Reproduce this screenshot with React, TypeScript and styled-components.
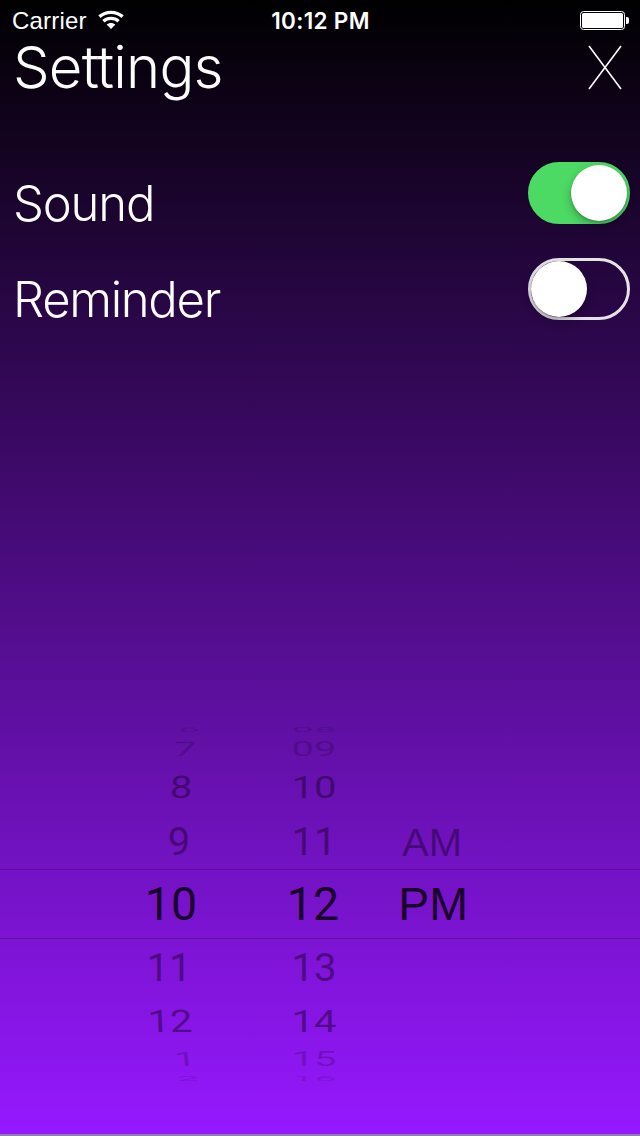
import React from "react";
import styled, { createGlobalStyle } from "styled-components";

const Global = createGlobalStyle`
  * { box-sizing: border-box; }
  body { margin: 0; }
`;

const Screen = styled.main`
  width: 640px;
  height: 1136px;
  overflow: hidden;
  display: flex;
  flex-direction: column;
  background: linear-gradient(#000 0%, #9618ff 100%);
  border-bottom: 2px solid #8d7fa8;
  color: #fff;
  font-family: "Liberation Sans", Arial, sans-serif;
`;

const StatusBar = styled.div`
  height: 40px;
  display: grid;
  grid-template-columns: 1fr auto 1fr;
  align-items: center;
  padding: 0 11px 0 12px;
  font-size: 24px;
  line-height: 24px;
`;

const Carrier = styled.div`
  display: flex;
  align-items: center;
  gap: 11px;
  letter-spacing: 0.2px;
`;

const CarrierName = styled.span`
  padding-top: 1px;
`;

const Clock = styled.div`
  padding-top: 1px;
  font-family: Inter, "Liberation Sans", sans-serif;
  font-weight: 600;
  font-size: 22.5px;
  letter-spacing: 0.3px;
`;

const Battery = styled.svg`
  justify-self: end;
  margin-top: 2px;
`;

const Header = styled.header`
  height: 86px;
  display: flex;
  justify-content: space-between;
  padding: 0 18px 0 13px;
`;

const Title = styled.h1`
  margin: 0;
  font-family: Inter, sans-serif;
  font-weight: 300;
  font-size: 58px;
  line-height: 54px;
  letter-spacing: -0.8px;
`;

const Close = styled.button`
  width: 34px;
  height: 46px;
  margin-top: 5px;
  padding: 0;
  border: 0;
  background: none;
`;

const Option = styled.div`
  height: 96px;
  display: flex;
  align-items: center;
  justify-content: space-between;
  padding: 0 10px 0 13px;
`;

const OptionLabel = styled.span<{ $tracking: number }>`
  padding-top: 57px;
  height: 96px;
  font-family: Inter, sans-serif;
  font-weight: 300;
  font-size: 49px;
  line-height: 42px;
  letter-spacing: ${(p) => p.$tracking}px;
`;

const Toggle = styled.div<{ $on?: boolean }>`
  width: 102px;
  height: 62px;
  margin-top: 38px;
  border-radius: 31px;
  display: flex;
  align-items: center;
  justify-content: ${(p) => (p.$on ? "flex-end" : "flex-start")};
  border: 3px solid ${(p) => (p.$on ? "#4cd964" : "#e5e3e6")};
  background: ${(p) => (p.$on ? "#4cd964" : "transparent")};
`;

const Knob = styled.div`
  width: 56px;
  height: 56px;
  border-radius: 50%;
  background: #fff;
  box-shadow: 0 4px 9px rgba(0, 0, 0, 0.28), 0 1px 2px rgba(0, 0, 0, 0.2);
`;

const Picker = styled.section`
  margin-top: 404px;
`;

const PickerRow = styled.div<{ $h: number; $ink: string }>`
  height: ${(p) => p.$h}px;
  display: grid;
  grid-template-columns: 256px 116px 120px;
  grid-template-rows: 100%;
  color: ${(p) => p.$ink};
`;

const Selected = styled(PickerRow)`
  border-top: 1px solid #5c0e9c;
  border-bottom: 1px solid #620fa6;
`;

const Cell = styled.div<{
  $size: number;
  $sy: number;
  $x: number;
  $y: number;
  $skew: number;
  $letters: boolean;
}>`
  display: flex;
  align-items: center;
  justify-content: center;
  font-family: ${(p) => (p.$letters ? `"Liberation Sans", Arial` : `Roboto, "Liberation Sans"`)}, sans-serif;
  font-size: ${(p) => p.$size}px;
  line-height: 1;
  white-space: nowrap;
  transform: translate(${(p) => p.$x}px, ${(p) => p.$y}px) skewX(${(p) => p.$skew}deg)
    scaleY(${(p) => p.$sy});
`;

type Row = {
  h: number;
  ink: string;
  size: number;
  sy: number;
  y: number;
  skew: number;
  hour: [string, number];
  minute: [string, number];
  period?: [string, number];
};

const rows: Row[] = [
  { h: 14, ink: "rgba(30,0,50,.2)", size: 40, sy: 0.16, y: 1, skew: 0, hour: ["6", 61], minute: ["08", 0] },
  { h: 25, ink: "rgba(30,0,50,.26)", size: 40, sy: 0.5, y: 1, skew: -6, hour: ["7", 57], minute: ["09", 0] },
  { h: 53, ink: "rgba(30,0,50,.5)", size: 40, sy: 0.78, y: 0, skew: -2, hour: ["8", 53], minute: ["10", 0] },
  { h: 55, ink: "rgba(30,0,50,.5)", size: 40, sy: 0.98, y: 0, skew: 0, hour: ["9", 51], minute: ["11", 0], period: ["AM", 0] },
  { h: 70, ink: "#190429", size: 46.5, sy: 1, y: 0, skew: 0, hour: ["10", 43], minute: ["12", -1], period: ["PM", 1] },
  { h: 55, ink: "rgba(30,0,50,.5)", size: 40, sy: 0.98, y: 1, skew: 0, hour: ["11", 41], minute: ["13", 0] },
  { h: 53, ink: "rgba(30,0,50,.5)", size: 40, sy: 0.78, y: 1, skew: 2, hour: ["12", 42], minute: ["14", 0] },
  { h: 25, ink: "rgba(30,0,50,.26)", size: 40, sy: 0.5, y: 0, skew: 6, hour: ["1", 57], minute: ["15", 0] },
  { h: 14, ink: "rgba(30,0,50,.18)", size: 40, sy: 0.16, y: 0, skew: 0, hour: ["2", 60], minute: ["16", 0] },
];

const WifiIcon = () => (
  <svg width="26" height="20" viewBox="0 0 26 20" fill="none" stroke="#fff">
    <path d="M1.4 6.6C8 .9 18 .9 24.6 6.6" strokeWidth="3.4" />
    <path d="M5.4 11.2c4.2-3.8 11-3.8 15.2 0" strokeWidth="3.2" />
    <path d="M8.6 14.6c2.5-2.2 6.3-2.2 8.8 0L13 19Z" fill="#fff" stroke="none" />
  </svg>
);

export default function App() {
  return (
    <>
      <Global />
      <Screen>
        <StatusBar>
          <Carrier>
            <CarrierName>Carrier</CarrierName>
            <WifiIcon />
          </Carrier>
          <Clock>10:12 PM</Clock>
          <Battery width="49" height="20" viewBox="0 0 49 20">
            <rect x=".5" y=".5" width="44" height="18" rx="3" fill="none" stroke="#fff" />
            <rect x="2" y="2" width="41" height="15" rx="1.5" fill="#fff" />
            <path d="M46 6h1a2 2 0 0 1 2 2v3a2 2 0 0 1-2 2h-1Z" fill="#fff" />
          </Battery>
        </StatusBar>
        <Header>
          <Title>Settings</Title>
          <Close aria-label="Close">
            <svg width="34" height="46" viewBox="0 0 34 46" stroke="#fff" strokeWidth="1.6">
              <path d="M1 1 33 44M33 1 1 44" />
            </svg>
          </Close>
        </Header>
        <Option>
          <OptionLabel $tracking={-1.2}>Sound</OptionLabel>
          <Toggle $on>
            <Knob />
          </Toggle>
        </Option>
        <Option>
          <OptionLabel $tracking={-1.3}>Reminder</OptionLabel>
          <Toggle>
            <Knob />
          </Toggle>
        </Option>
        <Picker>
          {rows.map((r, i) => {
            const Wrap = i === 4 ? Selected : PickerRow;
            return (
              <Wrap key={i} $h={r.h} $ink={r.ink}>
                {[r.hour, r.minute, r.period].map(
                  (c, k) =>
                    c && (
                      <Cell
                        key={k}
                        $size={r.size}
                        $sy={r.sy}
                        $x={c[1]}
                        $y={r.y}
                        $skew={k === 0 ? r.skew : 0}
                        $letters={k === 2}
                      >
                        {c[0]}
                      </Cell>
                    )
                )}
              </Wrap>
            );
          })}
        </Picker>
      </Screen>
    </>
  );
}
